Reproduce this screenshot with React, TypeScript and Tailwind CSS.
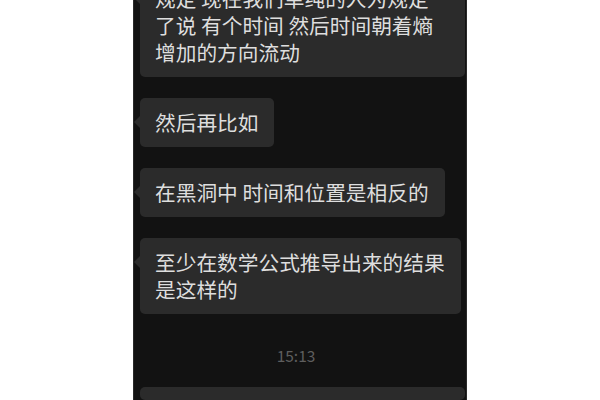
import React from "react";

const font = { fontFamily: '"Noto Sans CJK SC", "Noto Sans", sans-serif' };

function Bubble({ lines, full }: { lines: string[]; full?: boolean }) {
  return (
    <div
      className={`relative rounded-[5px] bg-[#2b2b2b] py-[11px] pl-[15px] pr-[16px] text-[20.7px] leading-[27px] text-[#dedede] whitespace-pre ${
        full ? "self-stretch" : "w-fit"
      }`}
    >
      <span className="absolute left-[-6px] top-[18px] h-0 w-0 border-y-[6px] border-r-[6px] border-y-transparent border-r-[#2b2b2b]" />
      {lines.map((l, i) => (
        <div key={i}>{l}</div>
      ))}
    </div>
  );
}

export default function App() {
  return (
    <div className="flex h-[400px] w-[600px] justify-center overflow-hidden bg-white" style={font}>
      <div className="flex h-full w-[334px] flex-col border-x border-[#2a2a2a] bg-[#121212] pl-[6px] pr-[1px]">
        <div className="-mt-[26px] flex flex-col items-start gap-[21px]">
          <Bubble
            full
            lines={["规定 现在我们单纯的人为规定", "了说 有个时间 然后时间朝着熵", "增加的方向流动"]}
          />
          <Bubble lines={["然后再比如"]} />
          <Bubble lines={["在黑洞中 时间和位置是相反的"]} />
          <Bubble lines={["至少在数学公式推导出来的结果", "是这样的"]} />
        </div>
        <div className="mt-[31px] h-[20px] pr-[13px] text-center text-[15.5px] leading-[20px] text-[#5e5e5e]">
          15:13
        </div>
        <div className="mt-[22px] h-[60px] self-stretch rounded-[5px] bg-[#2b2b2b]" />
      </div>
    </div>
  );
}
